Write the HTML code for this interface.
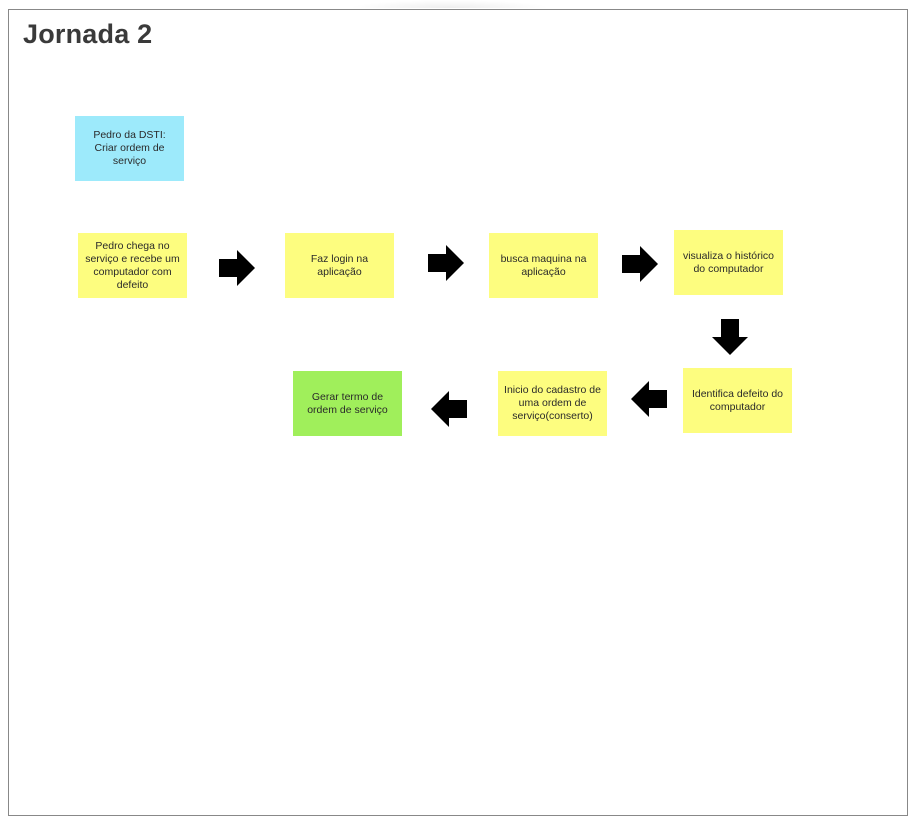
<!DOCTYPE html>
<html><head><meta charset="utf-8"><style>
body{margin:0;width:916px;height:825px;background:#fff;position:relative;overflow:hidden;font-family:"Liberation Sans",sans-serif}
.frame{position:absolute;left:8px;top:9px;width:898px;height:805px;border:1px solid #888}
h1{position:absolute;left:23px;top:19px;margin:0;font-size:27px;font-weight:bold;color:#3a3a3a;letter-spacing:0.2px}
.s{position:absolute;width:109px;height:65px;display:flex;align-items:center;justify-content:center;text-align:center;font-size:10.5px;line-height:13px;color:#2a2a2a;box-sizing:border-box;padding:0 3px}
.y{background:#fdfd7f}.b{background:#9deafb}.g{background:#a0ef5b}
svg{position:absolute}
.shadow{position:absolute;left:350px;top:0;width:200px;height:8px;background:radial-gradient(ellipse at center bottom,#eee,#fff 70%)}
</style></head><body>
<div class="shadow"></div>
<div class="frame"></div>
<h1>Jornada 2</h1>
<div class="s b" style="left:75px;top:116px">Pedro da DSTI:<br>Criar ordem de<br>serviço</div>
<div class="s y" style="left:78px;top:233px">Pedro chega no serviço e recebe um computador com defeito</div>
<div class="s y" style="left:285px;top:233px">Faz login na<br>aplicação</div>
<div class="s y" style="left:489px;top:233px">busca maquina na<br>aplicação</div>
<div class="s y" style="left:674px;top:230px">visualiza o histórico<br>do computador</div>
<div class="s y" style="left:683px;top:368px">Identifica defeito do<br>computador</div>
<div class="s y" style="left:498px;top:371px">Inicio do cadastro de<br>uma ordem de<br>serviço(conserto)</div>
<div class="s g" style="left:293px;top:371px">Gerar termo de<br>ordem de serviço</div>
<svg style="left:219px;top:250px" width="36" height="36" viewBox="0 0 36 36"><path d="M0 9H18V0L36 18L18 36V27H0Z"/></svg>
<svg style="left:428px;top:245px" width="36" height="36" viewBox="0 0 36 36"><path d="M0 9H18V0L36 18L18 36V27H0Z"/></svg>
<svg style="left:622px;top:246px" width="36" height="36" viewBox="0 0 36 36"><path d="M0 9H18V0L36 18L18 36V27H0Z"/></svg>
<svg style="left:712px;top:319px" width="36" height="36" viewBox="0 0 36 36"><path d="M9 0V18H0L18 36L36 18H27V0Z"/></svg>
<svg style="left:631px;top:381px" width="36" height="36" viewBox="0 0 36 36"><path d="M36 9H18V0L0 18L18 36V27H36Z"/></svg>
<svg style="left:431px;top:391px" width="36" height="36" viewBox="0 0 36 36"><path d="M36 9H18V0L0 18L18 36V27H36Z"/></svg>
</body></html>
